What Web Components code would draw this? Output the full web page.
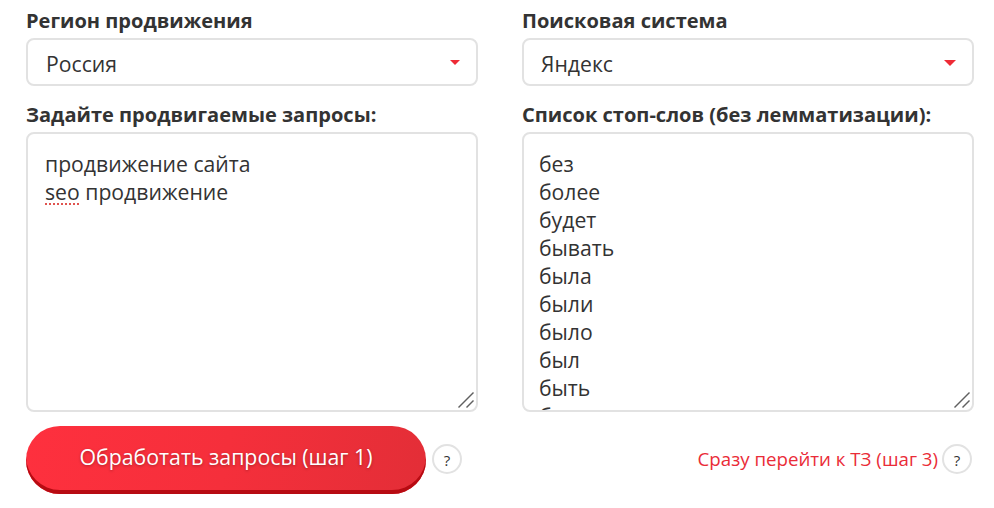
<!DOCTYPE html>
<html lang="ru">
<head>
<meta charset="utf-8">
<title>Запросы</title>
<style>
html, body { margin: 0; background: #fff; }
body { font-family: "Open Sans", sans-serif; color: #333; }
</style>
</head>
<body>
<query-form>
    <form-field label="Регион продвижения"><fake-select arrow="small">Россия</fake-select></form-field>
    <form-field label="Поисковая система"><fake-select style="--pad: 17px">Яндекс</fake-select></form-field>
    <form-field label="Задайте продвигаемые запросы:"><text-box>продвижение сайта
<spell-word>seo</spell-word> продвижение</text-box></form-field>
    <form-field label="Список стоп-слов (без лемматизации):"><text-box style="--pad: 15px">без
более
будет
бывать
была
были
было
был
быть
бы</text-box></form-field>
</query-form>
<script>
const fieldTemplate = document.createElement('template');
fieldTemplate.innerHTML = `
<style>
:host { display: block; }
label {
    display: block;
    height: 38px;
    line-height: 41px;
    font-size: 20.05px;
    font-weight: bold;
    color: #333;
}
</style>
<label></label>
<slot></slot>
`;

class FormField extends HTMLElement {
    constructor() {
        super();
        const shadow = this.attachShadow({ mode: 'open' });
        const temp = fieldTemplate.content.cloneNode(true);
        temp.querySelector('label').textContent = this.getAttribute('label');
        shadow.append(temp);
    }
}
customElements.define('form-field', FormField);

const selectTemplate = document.createElement('template');
selectTemplate.innerHTML = `
<style>
:host {
    display: flex;
    align-items: center;
    justify-content: space-between;
    box-sizing: border-box;
    height: 48px;
    padding: 3px 16px 0 var(--pad, 18px);
    border: 2px solid #e2e2e2;
    border-radius: 8px;
    background: #fff;
    font-size: 21.2px;
    color: #333;
}
i {
    display: block;
    width: 0;
    height: 0;
    margin-top: -2px;
    border-left: 6px solid transparent;
    border-right: 6px solid transparent;
    border-top: 6px solid #ee2b36;
}
:host([arrow="small"]) i {
    border-left-width: 5px;
    border-right-width: 5px;
    border-top-width: 5px;
}
</style>
<span><slot></slot></span><i></i>
`;

class FakeSelect extends HTMLElement {
    constructor() {
        super();
        this.attachShadow({ mode: 'open' }).append(selectTemplate.content.cloneNode(true));
    }
}
customElements.define('fake-select', FakeSelect);

const boxTemplate = document.createElement('template');
boxTemplate.innerHTML = `
<style>
:host {
    display: block;
    position: relative;
    box-sizing: border-box;
    height: 280px;
    border: 2px solid #e2e2e2;
    border-radius: 8px;
    background: #fff;
    overflow: hidden;
    font-size: 21.2px;
    line-height: 28px;
    color: #333;
}
.text {
    padding: 16px 17px 0 var(--pad, 17px);
    white-space: pre-wrap;
}
svg {
    position: absolute;
    right: 1px;
    bottom: 1px;
}
</style>
<div class="text"><slot></slot></div>
<svg width="18" height="17" viewBox="0 0 18 17" fill="none" stroke="#606060" stroke-width="1.4">
    <path d="M1.5 15.5 L16.5 0.5"/>
    <path d="M9.5 15.5 L16.5 8.5"/>
</svg>
`;

class TextBox extends HTMLElement {
    constructor() {
        super();
        this.attachShadow({ mode: 'open' }).append(boxTemplate.content.cloneNode(true));
    }
}
customElements.define('text-box', TextBox);

class SpellWord extends HTMLElement {
    constructor() {
        super();
        this.attachShadow({ mode: 'open' }).innerHTML = `<style>:host { display: inline; text-decoration: underline dotted #e0534f 2px; text-underline-offset: 3px; }</style><slot></slot>`;
    }
}
customElements.define('spell-word', SpellWord);

class HelpMark extends HTMLElement {
    constructor() {
        super();
        this.attachShadow({ mode: 'open' }).innerHTML = `
<style>
:host {
    display: flex;
    align-items: center;
    justify-content: center;
    box-sizing: border-box;
    flex: none;
    width: 30px;
    height: 30px;
    padding-top: 2px;
    border: 2px solid #e2e2e2;
    border-radius: 50%;
    background: #fff;
    font-size: 15px;
    color: #333;
}
</style>
?`;
    }
}
customElements.define('help-mark', HelpMark);

class RedButton extends HTMLElement {
    constructor() {
        super();
        this.attachShadow({ mode: 'open' }).innerHTML = `
<style>
:host {
    display: flex;
    align-items: center;
    justify-content: center;
    box-sizing: border-box;
    flex: none;
    width: 400px;
    height: 68px;
    padding-bottom: 8px;
    border-radius: 34px;
    background: linear-gradient(100deg, #fe303e 0%, #f52f3b 50%, #e32e37 100%);
    box-shadow: inset 0 -4px 0 #b70b12;
    font-size: 21.3px;
    color: #fff;
    text-shadow: 0 1px 3px rgba(0,0,0,.3);
}
</style>
<slot></slot>`;
    }
}
customElements.define('red-button', RedButton);

const formTemplate = document.createElement('template');
formTemplate.innerHTML = `
<style>
:host {
    display: block;
    box-sizing: border-box;
    width: 994px;
    padding: 0 20px 0 26px;
}
.grid {
    display: grid;
    grid-template-columns: 452px 452px;
    column-gap: 44px;
    row-gap: 8px;
}
.actions {
    display: grid;
    grid-template-columns: 452px 452px;
    column-gap: 44px;
    margin-top: 14px;
}
.left, .right {
    display: flex;
    align-items: center;
}
.left { gap: 6px; }
.left help-mark { margin-bottom: 3px; }
.right { justify-content: flex-end; gap: 4px; font-size: 18.7px; color: #ea2c38; padding: 0 2px 3px 0; height: 68px; box-sizing: border-box; }
</style>
<div class="grid"><slot></slot></div>
<div class="actions">
    <div class="left"><red-button>Обработать запросы (шаг 1)</red-button><help-mark></help-mark></div>
    <div class="right"><span>Сразу перейти к ТЗ (шаг 3)</span><help-mark></help-mark></div>
</div>
`;

class QueryForm extends HTMLElement {
    constructor() {
        super();
        this.attachShadow({ mode: 'open' }).append(formTemplate.content.cloneNode(true));
    }
}
customElements.define('query-form', QueryForm);
</script>
</body>
</html>
